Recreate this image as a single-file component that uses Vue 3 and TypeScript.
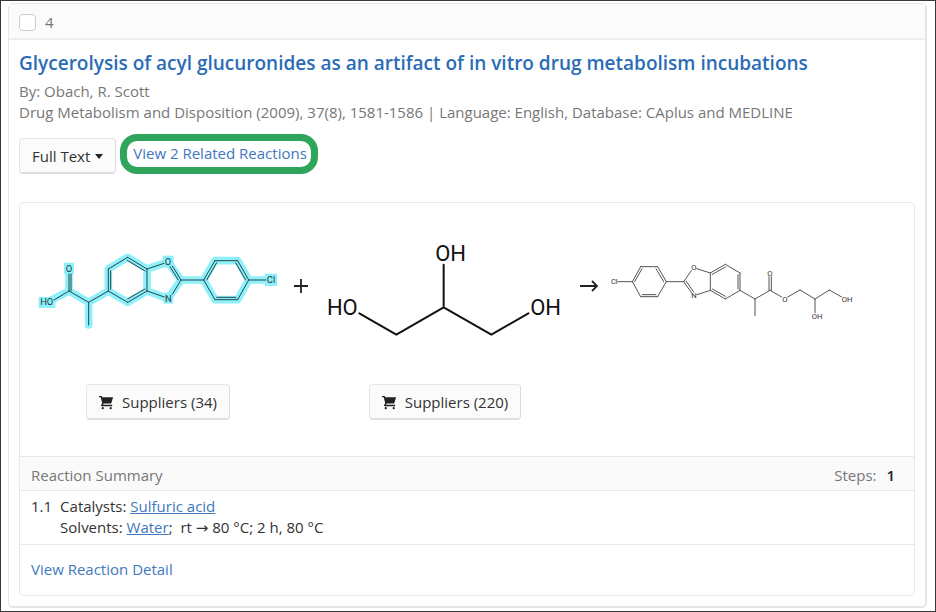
<script setup lang="ts">
import { ref } from 'vue'

interface Label {
  x: number
  y: number
  text: string
}

const selected = ref(false)

const substrateBonds: string =
  'M117 102V153M123 102V153M117 153L72 180M117 153L176 187M176 187V255M176 187L235 153M235 153V87M242 148V92M235 87L293 52M293 52L351 87M292 61L345 93M351 87V153M351 153L293 187M345 147L293 177M293 187L235 153M351 87L402 70M427 78L453 120M420 80L445 120M453 120L427 163M351 153L403 171M453 120H521M521 120L555 62M530 120L560 68M555 62H623M623 62L656 120M617 68L647 120M656 120L623 179M623 179H555M618 172H560M555 179L521 120M656 120H707'
const substrateGlow: string =
  'M117 85V153L50 187M117 153L176 187V255M176 187L235 153V87L293 52L351 87V153L293 187L235 153M351 87L414 66L453 120L414 176L351 153M453 120H521L555 62H623L656 120L623 179H555L521 120M656 120H722'
const substrateLabels: Label[] = [
  { x: 117, y: 96, text: 'O' },
  { x: 50, y: 196, text: 'HO' },
  { x: 414, y: 75, text: 'O' },
  { x: 415, y: 185, text: 'N' },
  { x: 723, y: 130, text: 'Cl' },
]

const productBonds: string =
  'M54 95H97M97 95L122 50M104 95L126 56M122 50H173M173 50L199 95M168 56L191 95M199 95L173 140M173 140H122M168 134H127M122 140L97 95M199 95H251M251 95L274 62M251 95L275 129M258 93L281 126M290 56L331 69M331 69V121M331 121L291 134M331 69L376 43M337 73L376 51M376 43L420 69M420 69V121M414 74V117M420 121L376 147M376 147L331 121M376 139L337 117M420 121L465 147M465 147V197M465 147L510 121M507 121V80M514 121V80M510 121L545 141M563 141L600 120M600 120L645 147M645 147V188M645 147L688 120M688 120L725 141'
const productLabels: Label[] = [
  { x: 43, y: 103, text: 'Cl' },
  { x: 282, y: 61, text: 'O' },
  { x: 282, y: 145, text: 'N' },
  { x: 510, y: 77, text: 'O' },
  { x: 555, y: 155, text: 'O' },
  { x: 651, y: 206, text: 'OH' },
  { x: 741, y: 155, text: 'OH' },
]

const glycerolLabels: Label[] = [
  { x: 512, y: 92, text: 'OH' },
  { x: 187, y: 256, text: 'HO' },
  { x: 797, y: 256, text: 'OH' },
]
</script>

<template>
  <main class="page">
    <article class="result">
      <header class="result-head">
        <label class="pick">
          <input v-model="selected" type="checkbox" class="check" />
          <span>4</span>
        </label>
      </header>

      <div class="result-body">
        <h2 class="title">
          <a href="#reference">Glycerolysis of acyl glucuronides as an artifact of in vitro drug metabolism incubations</a>
        </h2>
        <p class="meta">By: Obach, R. Scott</p>
        <p class="meta">Drug Metabolism and Disposition (2009), 37(8), 1581-1586 | Language: English, Database: CAplus and MEDLINE</p>

        <div class="actions">
          <button type="button" class="btn">Full Text<span class="caret"></span></button>
          <a href="#reactions" class="related">View 2 Related Reactions</a>
        </div>

        <section class="panel">
          <div class="scheme">
            <svg class="molecule" viewBox="0 -24 768 336" role="img">
              <path class="glow" :d="substrateGlow" />
              <g class="glow-boxes">
                <rect x="102" y="68" width="30" height="34" />
                <rect x="26" y="171" width="50" height="33" />
                <rect x="398" y="47" width="33" height="36" />
                <rect x="400" y="158" width="30" height="33" />
                <rect x="705" y="101" width="36" height="37" />
              </g>
              <path class="bond bond-dark" :d="substrateBonds" />
              <text v-for="(l, i) in substrateLabels" :key="i" :x="l.x" :y="l.y" class="atom atom-medium">{{ l.text }}</text>
            </svg>
            <span class="operator">
              <svg viewBox="0 0 16 16" class="plus"><path d="M8 1V15M1 8H15" /></svg>
            </span>
            <svg class="molecule" viewBox="108 6 774 336" role="img">
              <path class="bond bond-heavy" d="M491 104V232M491 232L349 314L238 250M491 232L634 314L745 250" />
              <text v-for="(l, i) in glycerolLabels" :key="i" :x="l.x" :y="l.y" class="atom atom-large">{{ l.text }}</text>
            </svg>
            <span class="operator">
              <svg viewBox="0 0 20 14" class="arrow"><path d="M1 7H18M13 2L18 7L13 12" /></svg>
            </span>
            <svg class="molecule" viewBox="12 -54 768 336" role="img">
              <path class="bond bond-light" :d="productBonds" />
              <text v-for="(l, i) in productLabels" :key="i" :x="l.x" :y="l.y" class="atom atom-small">{{ l.text }}</text>
            </svg>

            <button type="button" class="btn supplier">
              <svg viewBox="0 0 16 16" class="cart">
                <path d="M0 1H3L3.500 2.500H15L13 9H4.800L4.300 10.300H14V12H2.500L2.200 11L3.400 8.600L1.800 2.300H0Z" />
                <circle cx="4" cy="14" r="1.200" /><circle cx="12.500" cy="14" r="1.200" />
              </svg>
              Suppliers (34)
            </button>
            <button type="button" class="btn supplier second">
              <svg viewBox="0 0 16 16" class="cart">
                <path d="M0 1H3L3.500 2.500H15L13 9H4.800L4.300 10.300H14V12H2.500L2.200 11L3.400 8.600L1.800 2.300H0Z" />
                <circle cx="4" cy="14" r="1.200" /><circle cx="12.500" cy="14" r="1.200" />
              </svg>
              Suppliers (220)
            </button>
          </div>

          <div class="summary">
            <span>Reaction Summary</span>
            <span class="steps">Steps: <strong>1</strong></span>
          </div>

          <div class="conditions">
            <span>1.1</span>
            <div>
              <div>Catalysts: <a href="#sulfuric-acid">Sulfuric acid</a></div>
              <div>Solvents: <a href="#water">Water</a>;&nbsp; rt <span class="to">→</span> 80 °C; 2 h, 80 °C</div>
            </div>
          </div>

          <footer class="detail"><a href="#detail">View Reaction Detail</a></footer>
        </section>
      </div>
    </article>
  </main>
</template>

<style>
body {
  background: #fff;
}
</style>

<style scoped>
* {
  box-sizing: border-box;
}
.page {
  min-height: 100vh;
  padding: 2px 8px 3px 7px;
  border: 1px solid #3a3839;
  font-family: "Open Sans", "Noto Sans", sans-serif;
  font-size: 15px;
  line-height: 21px;
  color: #333;
}
a {
  color: #3f78bd;
  text-decoration: none;
}
.result {
  border: 1px solid #e6e6e6;
  border-right-width: 2px;
  border-bottom-width: 2px;
  border-radius: 5px;
}
.result-head {
  padding: 9px 10px 6px;
  border-bottom: 2px solid #eee;
  background: #fbfbfb;
  line-height: 19px;
}
.pick {
  display: flex;
  width: max-content;
  align-items: center;
  gap: 9px;
  color: #777;
}
.check {
  appearance: none;
  width: 17px;
  height: 17px;
  margin: 0;
  border: 1px solid #ccc;
  border-radius: 4px;
  background: #fff;
}
.check:checked {
  background: #3f78bd;
}
.result-body {
  padding: 10px;
}
.title {
  margin: 0 0 5px;
  font-size: 19px;
  line-height: 26px;
  font-weight: 600;
}
.title a {
  color: #2a6cb5;
}
.meta {
  margin: 0;
  color: #777;
}
.actions {
  display: flex;
  align-items: flex-end;
  gap: 4px;
  margin: 11px 0 28px;
}
.btn {
  display: inline-flex;
  align-items: center;
  height: 36px;
  padding: 1px 12px 0;
  border: 1px solid #e6e6e6;
  border-right-color: #dcdcdc;
  border-bottom: 2px solid #dfdfdf;
  border-radius: 4px;
  background: #fbfbfb;
  color: #333;
  font: inherit;
}
.caret {
  margin-left: 5px;
  border: 4px solid transparent;
  border-top: 5px solid #222;
  border-bottom-width: 0;
}
.related {
  padding: 2px 4px 3px 6px;
  border: 7px solid #2ea55a;
  border-radius: 17px;
}
.panel {
  border: 1px solid #e8e8e8;
  border-radius: 5px;
}
.scheme {
  display: grid;
  grid-template-columns: 256px 30px 258px 30px 256px;
  grid-template-rows: 112px 36px;
  row-gap: 40px;
  padding: 29px 10px 36px;
}
.molecule {
  width: 100%;
  height: 112px;
}
.operator {
  display: flex;
  align-items: center;
  justify-content: center;
  padding-bottom: 4px;
}
.plus {
  width: 16px;
  height: 16px;
}
.arrow {
  width: 20px;
  height: 14px;
}
.operator path {
  fill: none;
  stroke: #222;
  stroke-width: 1.8;
}
.glow {
  fill: none;
  stroke: #8ef0fb;
  stroke-width: 23;
  stroke-linecap: round;
  stroke-linejoin: round;
}
.glow-boxes {
  fill: #8ef0fb;
}
.bond {
  fill: none;
  stroke-linecap: round;
  stroke-linejoin: round;
}
.bond-dark {
  stroke: #24474b;
  stroke-width: 3;
}
.bond-heavy {
  stroke: #111;
  stroke-width: 6;
}
.bond-light {
  stroke: #555;
  stroke-width: 3;
}
.atom {
  font-family: Roboto, "Liberation Sans", sans-serif;
  text-anchor: middle;
}
.atom-medium {
  font-size: 28px;
  fill: #1c3a3d;
}
.atom-large {
  font-size: 66px;
  fill: #111;
}
.atom-small {
  font-size: 23px;
  fill: #333;
}
.supplier {
  justify-self: center;
  gap: 8px;
}
.supplier.second {
  grid-column: 3;
}
.cart {
  width: 15px;
  height: 15px;
  fill: #222;
}
.summary {
  display: flex;
  justify-content: space-between;
  padding: 8px 19px 4px 11px;
  border: solid #e8e8e8;
  border-width: 1px 0;
  background: #fafafa;
  color: #777;
}
.steps strong {
  margin-left: 6px;
  color: #222;
  font-weight: 600;
}
.conditions {
  display: flex;
  gap: 8px;
  padding: 5px 11px;
  border-bottom: 1px solid #e8e8e8;
}
.conditions a {
  text-decoration: underline;
}
.to {
  font-family: "DejaVu Sans", sans-serif;
}
.detail {
  padding: 14px 11px 15px;
}
</style>
